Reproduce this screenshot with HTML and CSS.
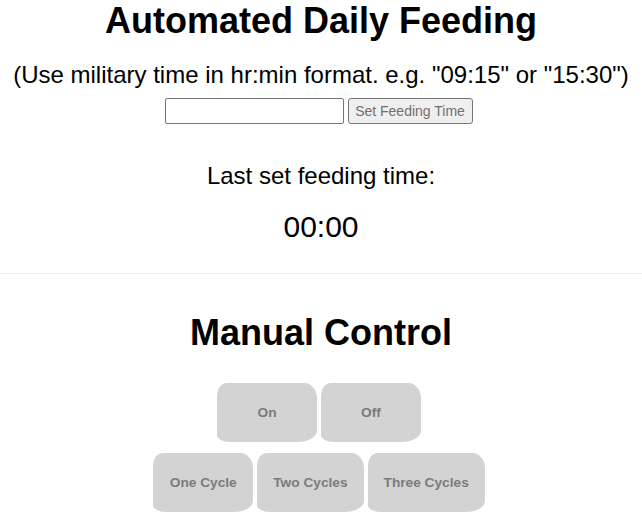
FILE: index.html
```html
<!DOCTYPE html>
<html>
<head>
<meta charset="utf-8">
<link rel="stylesheet" href="styles.css">
</head>
<body>
<section class="auto">
  <h1 class="title">Automated Daily Feeding</h1>
  <p class="hint">(Use military time in hr:min format. e.g. "09:15" or "15:30")</p>
  <div class="form-row">
    <input class="time-input" type="text">
    <button class="set-btn">Set Feeding Time</button>
  </div>
  <p class="last-label">Last set feeding time:</p>
  <p class="last-time">00:00</p>
</section>
<hr class="divider">
<section class="manual">
  <h1 class="title manual-title">Manual Control</h1>
  <div class="btn-row">
    <button class="ctl">On</button>
    <button class="ctl">Off</button>
  </div>
  <div class="btn-row">
    <button class="ctl">One Cycle</button>
    <button class="ctl">Two Cycles</button>
    <button class="ctl">Three Cycles</button>
  </div>
</section>
</body>
</html>
```
FILE: styles.css
```css
html, body {
  margin: 0;
  padding: 0;
  background: #fff;
}
body {
  font-family: "Liberation Sans", Arial, sans-serif;
  color: #000;
  text-align: center;
}
.title {
  font-size: 36px;
  font-weight: bold;
  margin: 0;
  line-height: 41px;
}
.hint {
  font-size: 24px;
  margin: 20px 0 0;
  line-height: 28px;
}
.form-row {
  display: flex;
  justify-content: center;
  gap: 4px;
  margin-top: 9px;
  height: 26px;
  padding-right: 5px;
}
.time-input {
  box-sizing: border-box;
  width: 179px;
  height: 26px;
  border: 1px solid #767676;
  border-radius: 2px;
  margin: 0;
  padding: 1px 2px;
  font-family: "Liberation Sans", Arial, sans-serif;
  font-size: 13px;
}
.set-btn {
  box-sizing: border-box;
  width: 125px;
  height: 26px;
  margin: 0;
  padding: 1px 4px;
  border: 1px solid #767676;
  border-radius: 3px;
  background: #efefef;
  color: #6f6f6f;
  font-family: "Liberation Sans", Arial, sans-serif;
  font-size: 14px;
  white-space: nowrap;
}
.last-label {
  font-size: 24px;
  line-height: 28px;
  margin: 38px 0 0;
}
.last-time {
  font-size: 30px;
  line-height: 34px;
  margin: 20px 0 0;
}
.divider {
  border: 0;
  border-top: 1px solid #eee;
  margin: 29px 0 0;
  height: 0;
}
.manual-title {
  margin-top: 38px;
}
.btn-row {
  display: flex;
  justify-content: center;
  gap: 4px;
  padding-right: 4px;
}
.manual-title + .btn-row {
  margin-top: 30px;
}
.btn-row + .btn-row {
  margin-top: 11px;
}
.ctl {
  box-sizing: border-box;
  min-width: 100px;
  height: 59px;
  margin: 0;
  padding: 0 16px;
  border: 0;
  background: #d3d3d3;
  color: #7b7b7b;
  font-family: "Liberation Sans", Arial, sans-serif;
  font-size: 13.7px;
  font-weight: bold;
  border-radius: 10px 13px 20px 13px / 12px 15px 11px 7px;
}
```
